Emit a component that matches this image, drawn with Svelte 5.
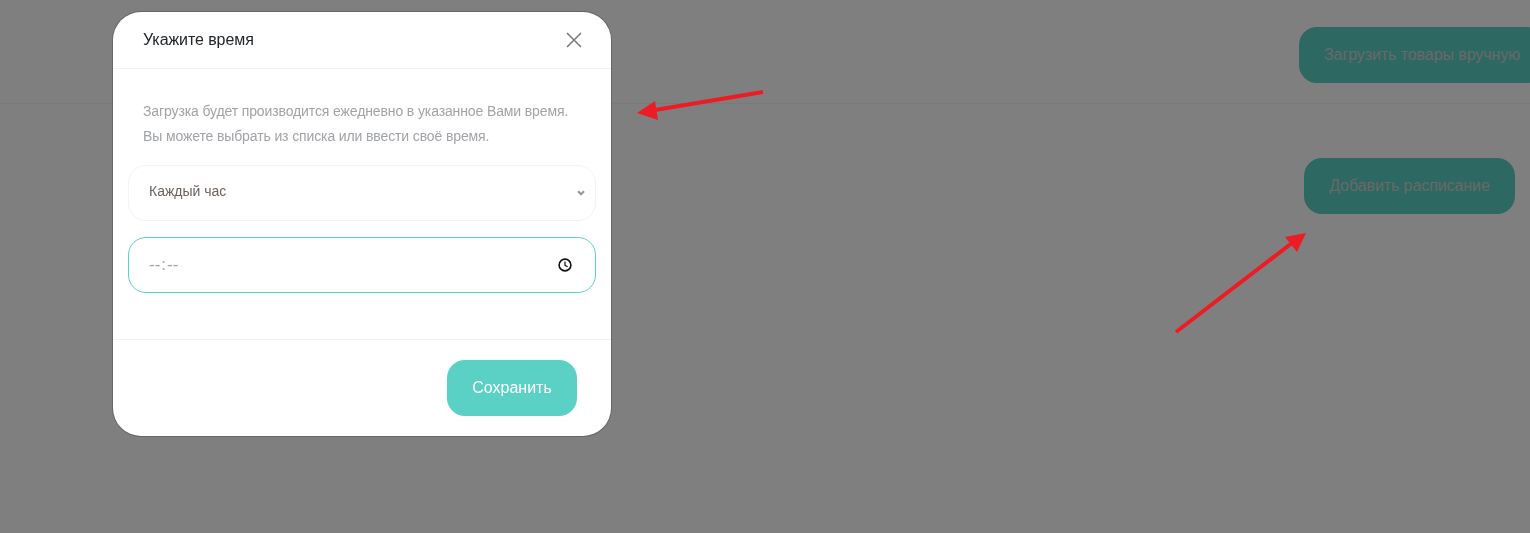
<script>
	let period = $state("hour");
</script>

<main class="page">
	<header class="top">
		<button class="btn upload">Загрузить товары вручную</button>
	</header>
	<section class="content">
		<button class="btn add">Добавить расписание</button>
	</section>
</main>

<div class="overlay"></div>

<div class="modal">
	<div class="modal-head">
		<h5>Укажите время</h5>
		<button class="close" aria-label="Закрыть">
			<svg width="16" height="16" viewBox="0 0 16 16"><path d="M1 1L15 15M15 1L1 15" stroke="#7a7a7a" stroke-width="1.5" fill="none" /></svg>
		</button>
	</div>
	<div class="modal-body">
		<p>Загрузка будет производится ежедневно в указанное Вами время.<br />Вы можете выбрать из списка или ввести своё время.</p>
		<div class="wrap">
			<select class="field pick" bind:value={period}>
				<option value="hour">Каждый час</option>
				<option value="day">Каждый день</option>
			</select>
			<svg class="chevron" width="8" height="6" viewBox="0 0 8 6"><path d="M1 1.2L4 4.2L7 1.2" stroke="#999" stroke-width="2.2" fill="none" /></svg>
		</div>
		<div class="wrap second">
			<input class="field time" type="time" lang="ru" />
			<svg class="clock" width="14" height="14" viewBox="0 0 14 14">
				<circle cx="7" cy="7" r="5.9" stroke="#111" stroke-width="1.6" fill="none" />
				<path d="M7 3.6V7.3L9.6 8.8" stroke="#111" stroke-width="1.2" fill="none" />
			</svg>
		</div>
	</div>
	<div class="modal-foot">
		<button class="save">Сохранить</button>
	</div>
</div>

<svg class="arrows" width="1530" height="533" viewBox="0 0 1530 533">
	<path d="M763 92L655 110" stroke="#ed1c24" stroke-width="4" fill="none" />
	<path d="M637 113L655 101L658 120Z" fill="#ed1c24" />
	<path d="M1176 332L1292 243" stroke="#ed1c24" stroke-width="4" fill="none" />
	<path d="M1306 233L1297 252L1285 237Z" fill="#ed1c24" />
</svg>

<style>
	:global(body) {
		margin: 0;
		background: #fff;
		overflow: hidden;
		font-family: "Liberation Sans", Arial, sans-serif;
	}
	.page {
		width: 1530px;
		height: 533px;
		overflow: hidden;
	}
	.top {
		height: 76px;
		border-bottom: 1px solid #f3f3f3;
		display: flex;
		padding-left: 1299px;
		padding-top: 27px;
	}
	.content {
		display: flex;
		padding: 54px 15px 0 0;
		justify-content: flex-end;
	}
	.btn {
		flex: none;
		height: 56px;
		padding: 0 25px;
		border: none;
		border-radius: 18px;
		background: #5bd0c5;
		color: #d2d2d2;
		letter-spacing: -0.08px;
		font: 16px "Liberation Sans", Arial, sans-serif;
	}
	.add {
		width: 211px;
		padding: 0;
	}
	.overlay {
		position: fixed;
		inset: 0;
		background: rgba(0, 0, 0, 0.5);
	}
	.modal {
		position: fixed;
		left: 113px;
		top: 12px;
		width: 498px;
		height: 424px;
		box-sizing: border-box;
		background: #fff;
		border-radius: 28px;
		box-shadow: 0 0 0 1px rgba(0, 0, 0, 0.2);
		display: flex;
		flex-direction: column;
	}
	.modal-head {
		height: 57px;
		flex: none;
		box-sizing: border-box;
		border-bottom: 1px solid #f2f2f2;
		display: flex;
		align-items: center;
		justify-content: space-between;
		padding: 0 29px 0 30px;
	}
	h5 {
		margin: 0;
		font-size: 16px;
		font-weight: 400;
		letter-spacing: -0.08px;
		color: #212529;
	}
	.close {
		display: flex;
		padding: 0;
		border: none;
		background: none;
	}
	.modal-body {
		flex: 1;
		padding: 30px 15px 0;
		display: flex;
		flex-direction: column;
	}
	p {
		margin: 0 0 16px;
		padding: 0 15px;
		font-size: 14px;
		line-height: 25px;
		letter-spacing: -0.12px;
		color: #a0a3a7;
	}
	.wrap {
		position: relative;
		width: 468px;
		height: 56px;
	}
	.second {
		margin-top: 16px;
	}
	.field {
		display: block;
		width: 468px;
		height: 56px;
		box-sizing: border-box;
		border: 1px solid #f3f3f3;
		border-radius: 18px;
		background: #fff;
		font: 14px "Liberation Sans", Arial, sans-serif;
		outline: none;
	}
	.pick {
		appearance: none;
		padding: 0 20px 4px;
		color: #6a625c;
	}
	.chevron {
		position: absolute;
		right: 11px;
		top: 25px;
	}
	.time {
		padding: 0 19px;
		border-color: #5bd0c5;
		color: #a0a3a7;
		font-size: 17px;
	}
	.time::-webkit-datetime-edit-ampm-field {
		display: none;
	}
	.time::-webkit-calendar-picker-indicator {
		opacity: 0;
	}
	.clock {
		position: absolute;
		right: 24px;
		top: 21px;
		pointer-events: none;
	}
	.modal-foot {
		height: 97px;
		flex: none;
		box-sizing: border-box;
		border-top: 1px solid #f2f2f2;
		display: flex;
		justify-content: flex-end;
		padding: 20px 34px 0 0;
	}
	.save {
		width: 130px;
		height: 56px;
		border: none;
		border-radius: 18px;
		background: #5bd0c5;
		color: #fff;
		font: 16px "Liberation Sans", Arial, sans-serif;
	}
	.arrows {
		position: fixed;
		left: 0;
		top: 0;
		pointer-events: none;
	}
</style>
